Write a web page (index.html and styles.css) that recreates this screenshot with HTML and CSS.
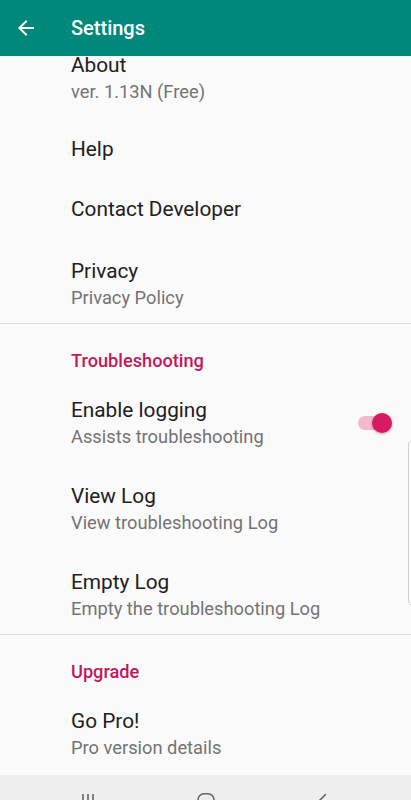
FILE: index.html
```html
<!DOCTYPE html>
<html lang="en">
<head>
    <meta charset="UTF-8">
    <meta name="viewport" content="width=device-width, initial-scale=1.0">
    <title>Settings</title>
    <link rel="stylesheet" href="styles.css">
</head>
<body>
    <div class="screen">
        <header class="app-bar">
            <svg class="back-icon" width="24" height="24" viewBox="0 0 24 24">
                <path d="M20 11H7.83l5.59-5.59L12 4l-8 8 8 8 1.41-1.41L7.83 13H20v-2z" fill="#fff"/>
            </svg>
            <h1 class="app-title">Settings</h1>
        </header>

        <main class="prefs">
            <div class="pref">
                <div class="pref-text">
                    <div class="pref-title">About</div>
                    <div class="pref-summary">ver. 1.13N (Free)</div>
                </div>
            </div>
            <div class="pref pref-single">
                <div class="pref-text">
                    <div class="pref-title">Help</div>
                </div>
            </div>
            <div class="pref pref-single">
                <div class="pref-text">
                    <div class="pref-title">Contact Developer</div>
                </div>
            </div>
            <div class="pref">
                <div class="pref-text">
                    <div class="pref-title">Privacy</div>
                    <div class="pref-summary">Privacy Policy</div>
                </div>
            </div>

            <div class="pref-category">Troubleshooting</div>
            <div class="pref">
                <div class="pref-text">
                    <div class="pref-title">Enable logging</div>
                    <div class="pref-summary">Assists troubleshooting</div>
                </div>
                <span class="switch">
                    <span class="switch-track"></span>
                    <span class="switch-thumb"></span>
                </span>
            </div>
            <div class="pref">
                <div class="pref-text">
                    <div class="pref-title">View Log</div>
                    <div class="pref-summary">View troubleshooting Log</div>
                </div>
            </div>
            <div class="pref">
                <div class="pref-text">
                    <div class="pref-title">Empty Log</div>
                    <div class="pref-summary">Empty the troubleshooting Log</div>
                </div>
            </div>

            <div class="pref-category">Upgrade</div>
            <div class="pref">
                <div class="pref-text">
                    <div class="pref-title">Go Pro!</div>
                    <div class="pref-summary">Pro version details</div>
                </div>
            </div>
        </main>

        <nav class="nav-bar">
            <svg class="nav-icon" width="24" height="24" viewBox="0 0 24 24">
                <path d="M7 1v22M12 1v22M17 1v22" stroke="#666" stroke-width="1.6" fill="none"/>
            </svg>
            <svg class="nav-icon" width="24" height="24" viewBox="0 0 24 24">
                <rect x="4" y="0.8" width="16" height="16" rx="6" stroke="#666" stroke-width="1.6" fill="none"/>
            </svg>
            <svg class="nav-icon" width="24" height="24" viewBox="0 0 24 24">
                <path d="M13.5 1.5L5.5 9.5l8 8" stroke="#666" stroke-width="1.6" fill="none" stroke-linecap="round"/>
            </svg>
        </nav>

        <div class="edge-handle"></div>
    </div>
</body>
</html>
```

FILE: styles.css
```css
body {
    margin: 0;
    padding: 0;
    font-family: Roboto, "Noto Sans", Arial, sans-serif;
    background-color: #fafafa;
}
.screen {
    position: relative;
    height: 800px;
    display: flex;
    flex-direction: column;
    overflow: hidden;
    background-color: #fafafa;
}
.app-bar {
    flex: 0 0 56px;
    display: flex;
    align-items: center;
    background-color: #00887a;
    position: relative;
    z-index: 2;
}
.back-icon {
    margin-left: 14px;
    flex-shrink: 0;
}
.app-title {
    margin: 0 0 0 33px;
    font-size: 20px;
    line-height: 24px;
    font-weight: 500;
    color: #fff;
}
.prefs {
    flex: 1;
    min-height: 0;
    margin-top: -25px;
    overflow: hidden;
}
.pref {
    display: flex;
    align-items: center;
    padding: 22px 19px 14px 71px;
}
.pref-single {
    padding-top: 20px;
    padding-bottom: 16px;
}
.pref-text {
    flex: 1;
}
.pref-title {
    font-size: 20.8px;
    line-height: 24px;
    color: #202020;
}
.pref-summary {
    margin-top: 4px;
    font-size: 18.3px;
    line-height: 22px;
    color: #737373;
}
.pref-category {
    border-top: 1px solid #dadada;
    padding: 26px 16px 4px 71px;
    font-size: 18.2px;
    line-height: 22px;
    font-weight: 500;
    color: #c2185b;
}
.switch {
    position: relative;
    flex-shrink: 0;
    width: 34px;
    height: 20px;
}
.switch-track {
    position: absolute;
    left: 0;
    top: 3px;
    width: 34px;
    height: 14px;
    border-radius: 7px;
    background-color: #f3b9ce;
}
.switch-thumb {
    position: absolute;
    left: 14px;
    top: 0;
    width: 20px;
    height: 20px;
    border-radius: 50%;
    background-color: #d81b60;
    box-shadow: 0 1px 3px rgba(0, 0, 0, 0.3);
}
.nav-bar {
    flex: 0 0 25px;
    display: flex;
    justify-content: center;
    gap: 94px;
    overflow: hidden;
    background-color: #eeeeee;
}
.nav-icon {
    margin-top: 18px;
    flex-shrink: 0;
}
.edge-handle {
    position: absolute;
    left: 408px;
    top: 440px;
    width: 10px;
    height: 164px;
    border: 1px solid #cfcfcf;
    border-radius: 5px;
    background-color: #fff;
}
```
